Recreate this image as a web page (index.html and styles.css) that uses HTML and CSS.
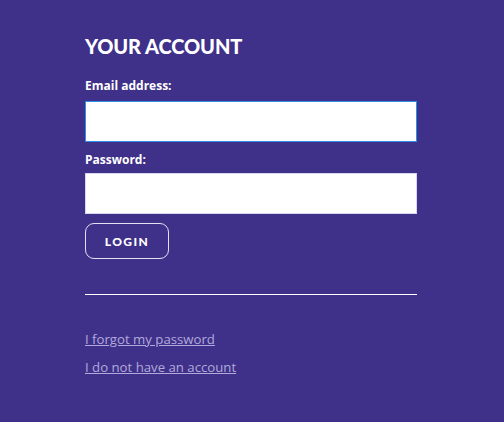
FILE: index.html
```html
<!DOCTYPE html>
<html>
<head>
<meta charset="utf-8">
<link rel="stylesheet" href="styles.css">
</head>
<body>
<main class="account">
  <h1 class="title">YOUR ACCOUNT</h1>
  <form class="form">
    <label class="label" for="email">Email address:</label>
    <input class="input input-focus" id="email" type="text">
    <label class="label label-pw" for="pw">Password:</label>
    <input class="input" id="pw" type="password">
    <button class="btn" type="button">LOGIN</button>
  </form>
  <hr class="divider">
  <nav class="links">
    <a class="link" href="#">I forgot my password</a>
    <a class="link" href="#">I do not have an account</a>
  </nav>
</main>
</body>
</html>
```
FILE: styles.css
```css
html, body {
  margin: 0;
  padding: 0;
}
body {
  background: #3f3089;
  width: 504px;
  height: 422px;
  font-family: "Open Sans", "Liberation Sans", sans-serif;
  color: #fff;
}
.account {
  width: 332px;
  margin-left: 85px;
  padding-top: 34px;
}
.title {
  margin: 0;
  font-family: "Lato", sans-serif;
  font-weight: 900;
  font-size: 20px;
  line-height: 24px;
  letter-spacing: -0.1px;
}
.form {
  display: flex;
  flex-direction: column;
  align-items: flex-start;
  margin-top: 20px;
}
.label {
  font-weight: 700;
  font-size: 12px;
  line-height: 16px;
  margin-bottom: 7px;
}
.label-pw {
  margin-top: 2px;
  margin-bottom: 5px;
}
.input {
  box-sizing: border-box;
  width: 332px;
  height: 41px;
  border: 1px solid #d6d8f2;
  background: #fff;
  margin: 0 0 8px 0;
  padding: 0 10px;
  outline: none;
}
.input-focus {
  border-color: #2f8ee6;
}
.btn {
  box-sizing: border-box;
  width: 84px;
  height: 36px;
  margin-top: 1px;
  background: transparent;
  border: 1px solid #e4e0f2;
  border-radius: 9px;
  color: #fff;
  font-family: "Lato", sans-serif;
  font-weight: 900;
  font-size: 12px;
  letter-spacing: 1.4px;
  padding: 0;
}
.divider {
  border: 0;
  border-top: 1px solid #fff;
  margin: 35px 0 0 0;
  height: 0;
}
.links {
  display: flex;
  flex-direction: column;
  gap: 9px;
  margin-top: 35px;
}
.link {
  color: #b1aadb;
  font-size: 13.2px;
  line-height: 19px;
  text-decoration: underline;
  align-self: flex-start;
}
```
